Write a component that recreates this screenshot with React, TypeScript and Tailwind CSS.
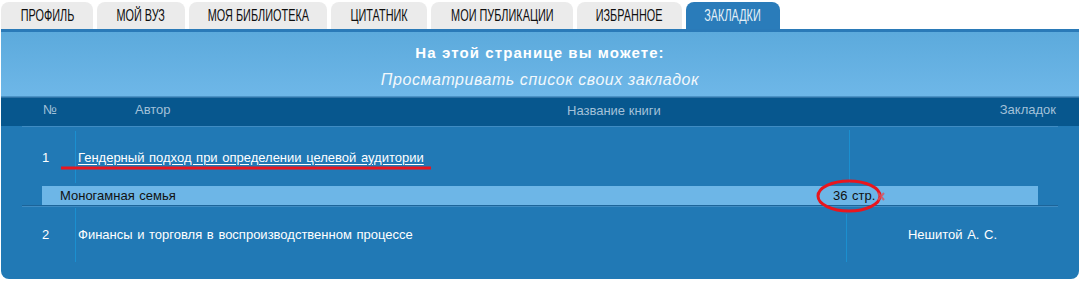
import React from "react";

const tabs = [
  { label: "ПРОФИЛЬ", w: "w-[92px]" },
  { label: "МОЙ ВУЗ", w: "w-[88px]" },
  { label: "МОЯ БИБЛИОТЕКА", w: "w-[138px]" },
  { label: "ЦИТАТНИК", w: "w-[96px]" },
  { label: "МОИ ПУБЛИКАЦИИ", w: "w-[142px]" },
  { label: "ИЗБРАННОЕ", w: "w-[105px]" },
  { label: "ЗАКЛАДКИ", w: "w-[94px]", active: true },
];

export default function App() {
  return (
    <div className="w-[1081px] h-[281px] bg-white overflow-hidden" style={{ fontFamily: '"Liberation Sans", Arial, sans-serif' }}>
      <div className="ml-[1px] w-[1078px] relative">
        {/* tabs */}
        <div className="flex gap-[4px] pt-[2px] h-[29px]">
          {tabs.map((t) => (
            <div
              key={t.label}
              className={`${t.w} h-[27px] rounded-t-[8px] flex items-center justify-center text-[16px] leading-none ${
                t.active ? "bg-[#2a7cba] text-[#e4f0f8]" : "bg-[#ebebeb] text-[#0f0f0f]"
              }`}
            >
              <span className="inline-block whitespace-nowrap scale-x-[0.68] pt-[1px]">{t.label}</span>
            </div>
          ))}
        </div>
        <div className="h-[3px] bg-[#2a7ab8]" />
        {/* info panel */}
        <div className="h-[64px] bg-gradient-to-b from-[#5caadc] to-[#6eb7e8] flex flex-col items-center pt-[11px]">
          <div className="text-[15px] font-bold text-white tracking-[1.1px] leading-[20px]">На этой странице вы можете:</div>
          <div className="text-[16px] italic text-[#f2f8fc] leading-[20px] mt-[7px] tracking-[0.55px]">Просматривать список своих закладок</div>
        </div>
        <div className="h-[1px] bg-[#4b93c6]" />
        <div className="h-[1px] bg-[#2f74a8]" />
        {/* header */}
        <div className="h-[28px] bg-[#07578e] flex items-center text-[13px] text-[#a3c1d9] relative pb-[4px]">
          <div className="ml-[42px] w-[92px]">№</div>
          <div>Автор</div>
          <div className="absolute left-[566px] top-[3px]">Название книги</div>
          <div className="ml-auto mr-[23px]">Закладок</div>
        </div>
        {/* body */}
        <div className="h-[153px] bg-[#2179b5] rounded-b-[8px] text-[13px] text-white" style={{ wordSpacing: "1px" }}>
          <div className="ml-[21px] w-[1036px] h-[1px] bg-[#3f8cc3]" />
          {/* row 1 */}
          <div className="ml-[21px] w-[1036px] h-[59px] flex">
            <div className="w-[53px] flex items-center pl-[20px] pt-[2px]">1</div>
            <div className="w-[1px] bg-[#1b8fd0] mt-[4px] mb-[3px]" />
            <div className="w-[773px] flex items-center pl-[2px] pt-[2px]">
              <span className="underline underline-offset-[2px]">Гендерный подход при определении целевой аудитории</span>
            </div>
            <div className="w-[1px] bg-[#1b8fd0] mt-[3px] mb-[3px]" />
            <div className="flex-1" />
          </div>
          {/* sub row */}
          <div className="ml-[41px] w-[996px] h-[19px] bg-[#6db6e7] flex items-center text-[#111] text-[13px]">
            <div className="w-[791px] pl-[18px]">Моногамная семья</div>
            <div>36 стр.</div>
          </div>
          <div className="ml-[21px] w-[1036px] h-[1px] bg-[#1c6499]" />
          <div className="ml-[21px] w-[1036px] h-[1px] bg-[#3f8cc3]" />
          {/* row 2 */}
          <div className="ml-[21px] w-[1036px] h-[55px] flex">
            <div className="w-[53px] flex items-center pl-[20px] pt-[1px]">2</div>
            <div className="w-[1px] bg-[#1b8fd0] mt-[1px] mb-[0px]" />
            <div className="w-[770px] flex items-center pl-[2px] pt-[1px]">Финансы и торговля в воспроизводственном процессе</div>
            <div className="w-[1px] bg-[#1b8fd0] mt-[7px] mb-[0px]" />
            <div className="flex-1 flex items-center justify-center pt-[1px]">Нешитой А. С.</div>
          </div>
        </div>
        {/* annotations */}
        <svg className="absolute left-0 top-0 pointer-events-none" width="1078" height="281" viewBox="0 0 1078 281">
          <line x1="60" y1="168" x2="430" y2="168" stroke="#e8161e" strokeWidth="3" />
          <ellipse cx="848" cy="196" rx="31" ry="15" fill="none" stroke="#e8161e" strokeWidth="3" />
          <path d="M877 193 L883 200 M883 193 L877 200" stroke="#e0505a" strokeWidth="2" opacity="0.8" />
        </svg>
      </div>
    </div>
  );
}
